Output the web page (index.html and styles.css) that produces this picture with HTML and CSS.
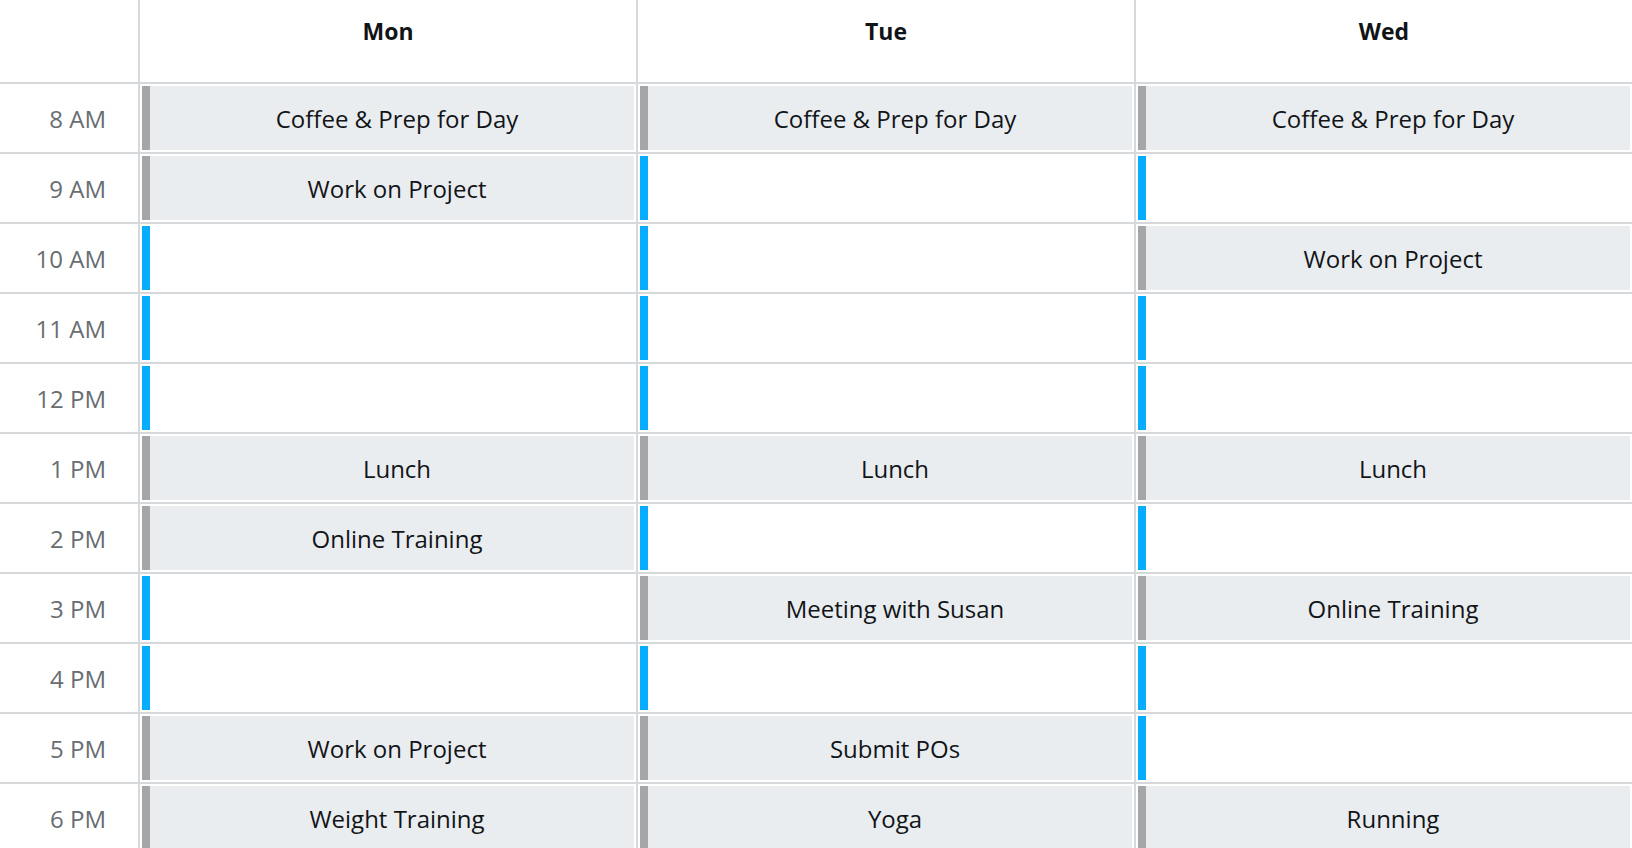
FILE: index.html
```html
<!DOCTYPE html>
<html lang="en">
<head>
<meta charset="utf-8">
<title>Weekly Schedule</title>
<link rel="stylesheet" href="styles.css">
</head>
<body>
<div class="schedule">
  <div class="head corner"></div>
  <div class="head day">Mon</div>
  <div class="head day">Tue</div>
  <div class="head day">Wed</div>

  <div class="time">8 AM</div>
  <div class="cell"><div class="slot busy">Coffee &amp; Prep for Day</div></div>
  <div class="cell"><div class="slot busy">Coffee &amp; Prep for Day</div></div>
  <div class="cell"><div class="slot busy">Coffee &amp; Prep for Day</div></div>

  <div class="time">9 AM</div>
  <div class="cell"><div class="slot busy">Work on Project</div></div>
  <div class="cell"><div class="slot free"></div></div>
  <div class="cell"><div class="slot free"></div></div>

  <div class="time">10 AM</div>
  <div class="cell"><div class="slot free"></div></div>
  <div class="cell"><div class="slot free"></div></div>
  <div class="cell"><div class="slot busy">Work on Project</div></div>

  <div class="time">11 AM</div>
  <div class="cell"><div class="slot free"></div></div>
  <div class="cell"><div class="slot free"></div></div>
  <div class="cell"><div class="slot free"></div></div>

  <div class="time">12 PM</div>
  <div class="cell"><div class="slot free"></div></div>
  <div class="cell"><div class="slot free"></div></div>
  <div class="cell"><div class="slot free"></div></div>

  <div class="time">1 PM</div>
  <div class="cell"><div class="slot busy">Lunch</div></div>
  <div class="cell"><div class="slot busy">Lunch</div></div>
  <div class="cell"><div class="slot busy">Lunch</div></div>

  <div class="time">2 PM</div>
  <div class="cell"><div class="slot busy">Online Training</div></div>
  <div class="cell"><div class="slot free"></div></div>
  <div class="cell"><div class="slot free"></div></div>

  <div class="time">3 PM</div>
  <div class="cell"><div class="slot free"></div></div>
  <div class="cell"><div class="slot busy">Meeting with Susan</div></div>
  <div class="cell"><div class="slot busy">Online Training</div></div>

  <div class="time">4 PM</div>
  <div class="cell"><div class="slot free"></div></div>
  <div class="cell"><div class="slot free"></div></div>
  <div class="cell"><div class="slot free"></div></div>

  <div class="time">5 PM</div>
  <div class="cell"><div class="slot busy">Work on Project</div></div>
  <div class="cell"><div class="slot busy">Submit POs</div></div>
  <div class="cell"><div class="slot free"></div></div>

  <div class="time">6 PM</div>
  <div class="cell"><div class="slot busy">Weight Training</div></div>
  <div class="cell"><div class="slot busy">Yoga</div></div>
  <div class="cell"><div class="slot busy">Running</div></div>
</div>
</body>
</html>
```

FILE: styles.css
```css
html, body {
  margin: 0;
  padding: 0;
  background: #ffffff;
}

body {
  width: 1632px;
  height: 848px;
  overflow: hidden;
  font-family: "Open Sans", "Noto Sans", sans-serif;
}

.schedule {
  display: grid;
  grid-template-columns: 138px repeat(3, 498px);
  grid-auto-rows: 70px;
  grid-template-rows: 84px;
}

.head {
  border-bottom: 2px solid #d6d9dc;
  box-sizing: border-box;
}

.day {
  border-left: 2px solid #d6d9dc;
  text-align: center;
  font-weight: 700;
  font-size: 23px;
  line-height: 28px;
  padding-top: 17px;
  color: #111417;
}

.time {
  box-sizing: border-box;
  border-bottom: 2px solid #d6d9dc;
  display: flex;
  align-items: center;
  justify-content: flex-end;
  padding-right: 32px;
  padding-top: 1px;
  font-size: 24px;
  color: #686d72;
}

.cell {
  box-sizing: border-box;
  border-left: 2px solid #d6d9dc;
  border-bottom: 2px solid #d6d9dc;
  padding: 2px;
  display: flex;
}

.slot {
  flex: 1;
  display: flex;
  align-items: center;
  justify-content: center;
  padding-left: 10px;
  padding-top: 1px;
  border-left: 8px solid #a4a6a8;
  font-size: 24px;
  color: #121518;
}

.slot.busy {
  background: #eaedf0;
}

.slot.free {
  background: #ffffff;
  border-left-color: #05acff;
}
```
